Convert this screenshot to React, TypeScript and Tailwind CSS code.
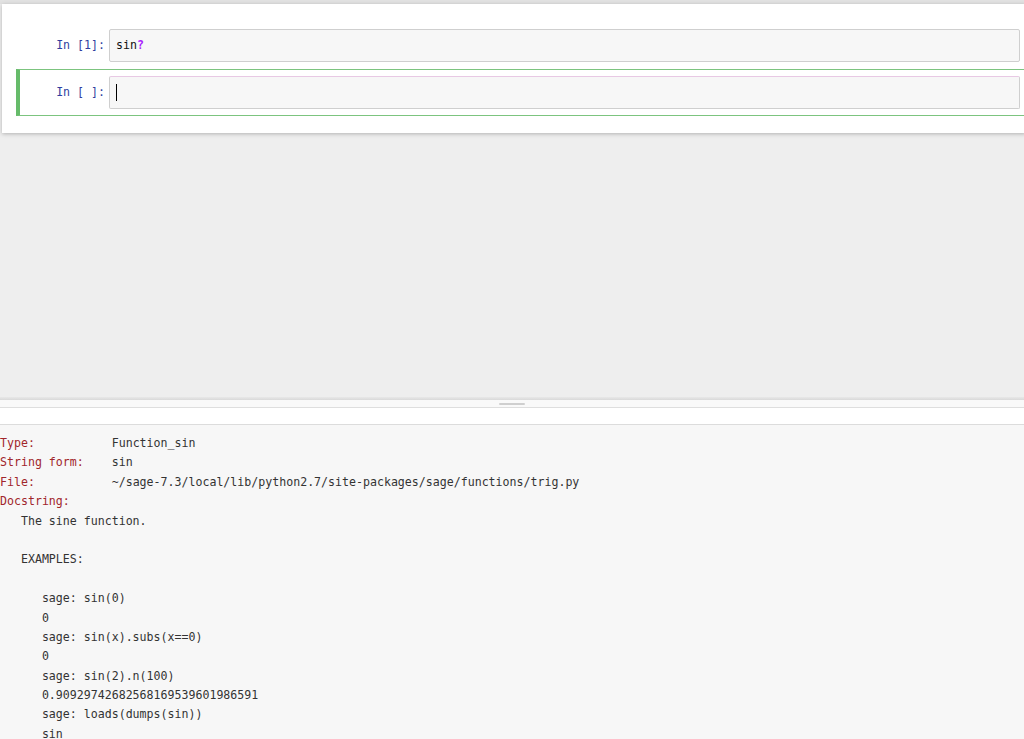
const mono = "font-['DejaVu_Sans_Mono','Liberation_Mono',monospace]";

const pagerLines: [string, string][] = [
  ["Type:           ", "Function_sin"],
  ["String form:    ", "sin"],
  ["File:           ", "~/sage-7.3/local/lib/python2.7/site-packages/sage/functions/trig.py"],
  ["Docstring:", ""],
  ["", "   The sine function."],
  ["", ""],
  ["", "   EXAMPLES:"],
  ["", ""],
  ["", "      sage: sin(0)"],
  ["", "      0"],
  ["", "      sage: sin(x).subs(x==0)"],
  ["", "      0"],
  ["", "      sage: sin(2).n(100)"],
  ["", "      0.90929742682568169539601986591"],
  ["", "      sage: loads(dumps(sin))"],
  ["", "      sin"],
];

function Cell({ prompt, selected, children }: any) {
  return (
    <div
      className={
        "flex items-stretch py-[6px] pr-[5px] pl-[2px] border-solid border-t border-r border-b border-l-[4px] " +
        (selected
          ? "border-t-[#7cc47f] border-b-[#7cc47f] border-r-[#7cc47f] border-l-[#66bb6a]"
          : "border-t-transparent border-b-transparent border-r-transparent border-l-transparent")
      }
    >
      <div className={`w-[87px] pr-[4px] flex items-center justify-end text-[11.6px] text-[#303f9f] ${mono}`}>
        {prompt}
      </div>
      <div
        className={
          "flex-1 h-[33px] flex items-center px-[6px] rounded-[2px] bg-[#f7f7f7] border " +
          (selected ? "border-[#cfcfcf] border-t-[#e8c9e4]" : "border-[#cfcfcf]")
        }
      >
        <span className={`text-[11.6px] text-[#111] ${mono}`}>{children}</span>
      </div>
    </div>
  );
}

export default function App() {
  return (
    <div className="w-[1024px] h-[739px] overflow-hidden bg-[#eeeeee] flex flex-col">
      <div className="h-[4px] bg-[#e2e2e2]" />
      <div className="ml-[2px] mr-[-2px] bg-white pt-[18px] pb-[17px] pl-[14px] shadow-[0_1px_4px_rgba(0,0,0,0.25)]">
        <Cell prompt="In [1]:">
          sin<span className="text-[#aa22ff] font-bold">?</span>
        </Cell>
        <Cell prompt="In [ ]:" selected>
          <span className="inline-block w-[1px] h-[17px] bg-black align-middle" />
        </Cell>
      </div>
      <div className="flex-1 min-h-0" />
      <div className="h-[3px] bg-gradient-to-b from-[#e8e8e8] to-[#d9d9d9]" />
      <div className="h-[8px] bg-[#f9f9f9] border-b border-[#dedede] flex justify-center items-center">
        <div className="w-[26px] h-[2px] bg-[#cfcfcf] rounded" />
      </div>
      <div className="h-[17px] bg-white border-b border-[#dcdcdc]" />
      <div className={`h-[314px] shrink-0 bg-[#f7f7f7] pt-[9px] text-[11.6px] leading-[19.4px] text-[#333] whitespace-pre ${mono}`}>
        {pagerLines.map(([label, value], i) => (
          <div key={i} className="h-[19.4px]">
            <span className="text-[#a1262b]">{label}</span>
            <span>{value}</span>
          </div>
        ))}
      </div>
    </div>
  );
}
